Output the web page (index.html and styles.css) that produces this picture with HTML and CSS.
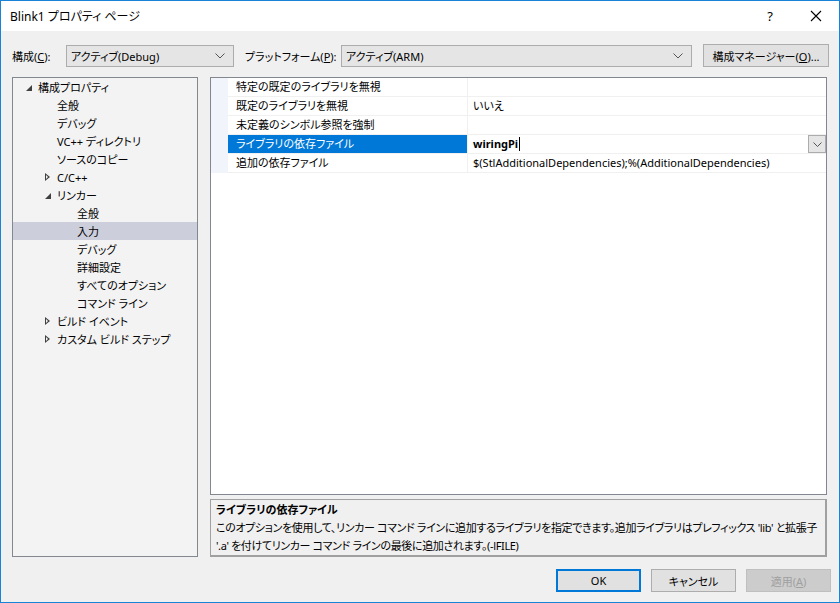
FILE: index.html
```html
<!DOCTYPE html>
<html lang="ja">
<head>
  <meta charset="UTF-8" />
  <title>Blink1 プロパティ ページ</title>
  <link rel="stylesheet" href="styles.css">
</head>
<body>
  <div class="window">
    <div class="titlebar">
      <span class="title">Blink1 プロパティ ページ</span>
      <span class="help">?</span>
      <span class="close">
        <svg width="12" height="12" viewBox="0 0 12 12"><path d="M1 1 L11 11 M11 1 L1 11" stroke="#000" stroke-width="1.1" fill="none"/></svg>
      </span>
    </div>

    <div class="config-row">
      <label class="cfg-label">構成(<u>C</u>):</label>
      <div class="combo combo-config">
        <span>アクティブ(Debug)</span>
        <svg class="chev" width="10" height="6" viewBox="0 0 10 6"><path d="M0.5 0.5 L5 5 L9.5 0.5" stroke="#555" fill="none"/></svg>
      </div>
      <label class="cfg-label plat-label">プラットフォーム(<u>P</u>):</label>
      <div class="combo combo-platform">
        <span>アクティブ(ARM)</span>
        <svg class="chev" width="10" height="6" viewBox="0 0 10 6"><path d="M0.5 0.5 L5 5 L9.5 0.5" stroke="#555" fill="none"/></svg>
      </div>
      <button class="btn btn-manager">構成マネージャー(<u>O</u>)...</button>
    </div>

    <div class="main">
      <div class="tree">
        <div class="node lv0"><span class="arrow open"></span>構成プロパティ</div>
        <div class="node lv1"><span class="arrow"></span>全般</div>
        <div class="node lv1"><span class="arrow"></span>デバッグ</div>
        <div class="node lv1"><span class="arrow"></span>VC++ ディレクトリ</div>
        <div class="node lv1"><span class="arrow"></span>ソースのコピー</div>
        <div class="node lv1"><span class="arrow closed"></span>C/C++</div>
        <div class="node lv1"><span class="arrow open"></span>リンカー</div>
        <div class="node lv2"><span class="arrow"></span>全般</div>
        <div class="node lv2 selected"><span class="arrow"></span>入力</div>
        <div class="node lv2"><span class="arrow"></span>デバッグ</div>
        <div class="node lv2"><span class="arrow"></span>詳細設定</div>
        <div class="node lv2"><span class="arrow"></span>すべてのオプション</div>
        <div class="node lv2"><span class="arrow"></span>コマンド ライン</div>
        <div class="node lv1"><span class="arrow closed"></span>ビルド イベント</div>
        <div class="node lv1"><span class="arrow closed"></span>カスタム ビルド ステップ</div>
      </div>

      <div class="right">
        <div class="grid">
          <div class="prop">
            <div class="gutter"></div>
            <div class="pname">特定の既定のライブラリを無視</div>
            <div class="pvalue"></div>
          </div>
          <div class="prop">
            <div class="gutter"></div>
            <div class="pname">既定のライブラリを無視</div>
            <div class="pvalue">いいえ</div>
          </div>
          <div class="prop">
            <div class="gutter"></div>
            <div class="pname">未定義のシンボル参照を強制</div>
            <div class="pvalue"></div>
          </div>
          <div class="prop active">
            <div class="gutter"></div>
            <div class="pname">ライブラリの依存ファイル</div>
            <div class="pvalue editing">
              <span class="edit-text">wiringPi</span><span class="caret"></span>
              <span class="drop">
                <svg width="9" height="5" viewBox="0 0 9 5"><path d="M0.5 0.5 L4.5 4.5 L8.5 0.5" stroke="#555" fill="none"/></svg>
              </span>
            </div>
          </div>
          <div class="prop">
            <div class="gutter"></div>
            <div class="pname">追加の依存ファイル</div>
            <div class="pvalue">$(StlAdditionalDependencies);%(AdditionalDependencies)</div>
          </div>
        </div>

        <div class="desc">
          <div class="desc-title">ライブラリの依存ファイル</div>
          <div class="desc-text">このオプションを使用して、リンカー コマンド ラインに追加するライブラリを指定できます。追加ライブラリはプレフィックス 'lib' と拡張子<br>'.a' を付けてリンカー コマンド ラインの最後に追加されます。(-lFILE)</div>
        </div>
      </div>
    </div>

    <div class="footer">
      <button class="btn btn-ok">OK</button>
      <button class="btn">キャンセル</button>
      <button class="btn btn-disabled" disabled>適用(<u>A</u>)</button>
    </div>
  </div>
</body>
</html>
```

FILE: styles.css
```css
* {
  box-sizing: border-box;
}
body {
  margin: 0;
  font-family: "Noto Sans", "Noto Sans CJK JP", sans-serif;
  font-size: 11px;
  font-feature-settings: "palt";
  color: #000;
}
.window {
  width: 840px;
  height: 603px;
  border: 1px solid #1883d7;
  background: #f0f0f0;
  display: flex;
  flex-direction: column;
}
.titlebar {
  height: 30px;
  background: #fff;
  display: flex;
  align-items: center;
  padding-left: 9px;
  font-size: 12px;
}
.title {
  flex: 1;
}
.help {
  width: 46px;
  text-align: center;
  font-size: 13px;
}
.close {
  width: 46px;
  display: flex;
  justify-content: center;
}

.config-row {
  display: flex;
  align-items: center;
  margin-top: 13px;
  padding-left: 11px;
  height: 23px;
  white-space: nowrap;
}
.cfg-label {
  width: 54px;
}
.plat-label {
  width: 96px;
  margin-left: 11px;
}
.combo {
  height: 22px;
  background: #e5e5e5;
  border: 1px solid #acacac;
  display: flex;
  align-items: center;
  justify-content: space-between;
  padding: 0 8px 0 4px;
}
.combo-config {
  width: 168px;
}
.combo-platform {
  width: 351px;
}
.btn {
  font: inherit;
  height: 23px;
  background: #e1e1e1;
  border: 1px solid #adadad;
  padding: 0;
  color: #000;
  white-space: nowrap;
}
.btn-manager {
  width: 126px;
  margin-left: 11px;
}

.main {
  display: flex;
  margin-top: 10px;
  padding-left: 11px;
  gap: 12px;
  height: 480px;
}
.tree {
  width: 186px;
  border: 1px solid #828790;
  background: #f3f3f3;
}
.node {
  height: 18px;
  display: flex;
  align-items: center;
  white-space: nowrap;
}
.node.selected {
  background: #cccedb;
}
.lv0 {
  padding-left: 6px;
}
.lv1 {
  padding-left: 25px;
}
.lv2 {
  padding-left: 45px;
}
.arrow {
  width: 19px;
  height: 18px;
  position: relative;
}
.arrow.open::before {
  content: '';
  position: absolute;
  left: 7px;
  top: 7px;
  border-style: solid;
  border-width: 0 0 6px 6px;
  border-color: transparent transparent #404040 transparent;
}
.arrow.closed::before {
  content: '';
  position: absolute;
  left: 7px;
  top: 5px;
  width: 0;
  height: 0;
  border-style: solid;
  border-width: 4px 0 4px 5px;
  border-color: transparent transparent transparent #404040;
}
.arrow.closed::after {
  content: '';
  position: absolute;
  left: 8px;
  top: 7px;
  border-style: solid;
  border-width: 2px 0 2px 2px;
  border-color: transparent transparent transparent #f3f3f3;
}

.right {
  width: 617px;
  display: flex;
  flex-direction: column;
  gap: 4px;
}
.grid {
  flex: 1;
  background: #fff;
  border: 1px solid #828790;
}
.prop {
  display: flex;
  height: 19px;
  white-space: nowrap;
}
.gutter {
  width: 17px;
  background: #f1f4fa;
}
.pname {
  width: 240px;
  padding-left: 8px;
  border-bottom: 1px solid #f0f0f0;
  border-right: 1px solid #f0f0f0;
  line-height: 18px;
}
.pvalue {
  flex: 1;
  padding-left: 5px;
  border-bottom: 1px solid #f0f0f0;
  line-height: 18px;
  display: flex;
  align-items: center;
}
.prop.active .pname {
  background: #0078d7;
  color: #fff;
}
.edit-text {
  font-weight: bold;
}
.caret {
  width: 1px;
  height: 14px;
  background: #000;
  margin-left: 1px;
}
.drop {
  margin-left: auto;
  width: 18px;
  height: 18px;
  border: 1px solid #acacac;
  background: #e5e5e5;
  display: flex;
  align-items: center;
  justify-content: center;
}

.desc {
  height: 58px;
  border: 1px solid #a0a0a0;
  border-right: 2px solid #a0a0a0;
  border-bottom: 2px solid #a0a0a0;
  padding: 1px 5px;
  line-height: 18px;
  white-space: nowrap;
}
.desc-title {
  font-weight: bold;
}
.desc-text {
  letter-spacing: -0.35px;
}

.footer {
  display: flex;
  justify-content: flex-end;
  gap: 10px;
  margin-top: 12px;
  padding-right: 8px;
}
.footer .btn {
  width: 85px;
}
.btn-ok {
  border: 2px solid #0078d7;
}
.btn-disabled {
  background: #cccccc;
  border-color: #bfbfbf;
  color: #a0a0a0;
}
```
